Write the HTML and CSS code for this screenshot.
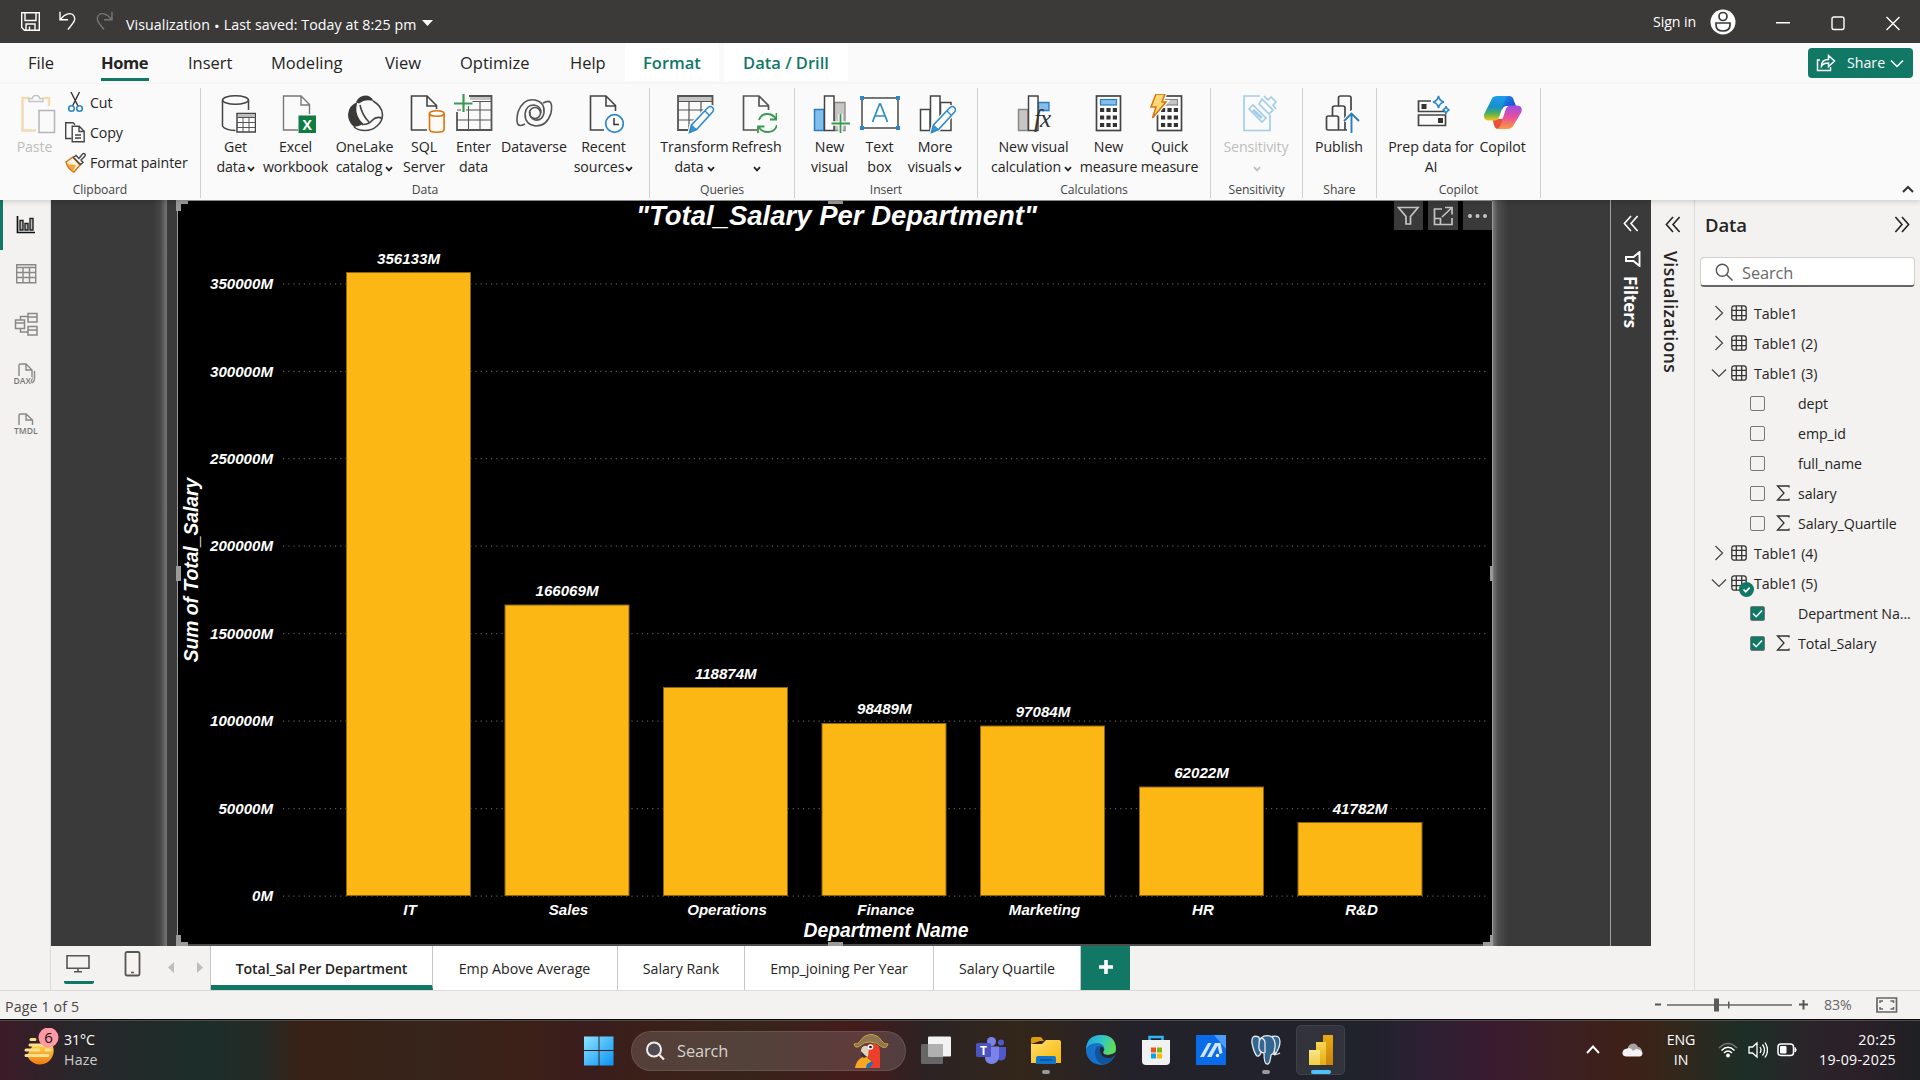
FILE: index.html
```html
<!DOCTYPE html>
<html lang="en">
<head>
<meta charset="utf-8">
<title>Visualization</title>
<link rel="stylesheet" href="styles.css">
</head>
<body>
<svg class="defs" width="0" height="0">
  <defs>
    <symbol id="caret" viewBox="0 0 8 6"><path d="M1 1.2 4 4.4 7 1.2" fill="none" stroke="currentColor" stroke-width="1.8"/></symbol>
    <symbol id="tbl" viewBox="0 0 16 16"><g fill="none" stroke="#333" stroke-width="1.3"><rect x=".8" y=".8" width="14.4" height="14.4" rx="2.5"/><path d="M5.3 1v14M10.7 1v14M1 5.3h14M1 10.7h14"/></g></symbol>
    <symbol id="sigma" viewBox="0 0 14 16"><path d="M13 2.5V1H1.5L8 8l-6.500 7H13v-1.500" fill="none" stroke="#333" stroke-width="1.300"/></symbol>
    <symbol id="right" viewBox="0 0 16 16"><path d="M4.500 1 11.500 8l-7 7" fill="none" stroke="#444" stroke-width="1.200"/></symbol>
    <symbol id="down" viewBox="0 0 16 16"><path d="M1 4.500 8 11.500l7-7" fill="none" stroke="#444" stroke-width="1.200"/></symbol>
    <symbol id="dbl" viewBox="0 0 16 18"><path d="M8 1 1 9l7 8M15 1 8 9l7 8" fill="none" stroke="currentColor" stroke-width="1.700"/></symbol>
    <symbol id="pencil" viewBox="0 0 27 29"><path d="M1.500 27.500 3.500 20 20 2.500q2.500-2 4.500 0t0 4.500L8.500 24.500z" fill="#fafafa" stroke="#fafafa" stroke-width="4"/><path d="M1.500 27.500 3.500 20 20 2.500q2.500-2 4.500 0t0 4.500L8.500 24.500z" fill="#fafafa" stroke="#2b88c8" stroke-width="1.500"/><path d="M1.500 27.500 3.500 20l5 4.500z" fill="#3f95d2" stroke="#2b88c8"/><path d="m17 6 4.500 4.500" stroke="#2b88c8" stroke-width="1.300"/></symbol>
  </defs>
</svg>
<div class="window">
  <header class="titlebar">
    <svg class="quick" viewBox="0 0 100 24" width="100" height="24"><g fill="none" stroke="#fff" stroke-width="1.400"><path d="M1.700 1.700h17.600v17.600H4.500L1.700 16.500zM5 2v7.500h11V2M6 19v-6h9v6M9.500 19v-3.500"/><path d="M40 .8v8h8M40.500 8.500C45 2 52 1 54 5s0 6-6 13.500"/><path stroke="#777" d="M92 .8v8h-8M91.500 8.500C87 2 80 1 78 5s0 6 6 13.500"/></g></svg>
    <span class="doc">Visualization <b>•</b> Last saved: Today at 8:25 pm</span>
    <svg class="docarrow" width="11" height="6" viewBox="0 0 11 6"><path d="M0 0h11L5.500 6z" fill="#fff"/></svg>
    <span class="signin">Sign in</span>
    <svg class="avatar" width="26" height="26" viewBox="0 0 26 26"><circle cx="13" cy="13" r="12.500" fill="#fff"/><circle cx="13" cy="7.500" r="4" fill="none" stroke="#3b3a39" stroke-width="1.700"/><path d="M6 14h14v2q0 6-7 6t-7-6z" fill="none" stroke="#3b3a39" stroke-width="1.700"/></svg>
    <svg class="winbtns" width="126" height="16" viewBox="0 0 126 16"><g fill="none" stroke="#fff" stroke-width="1.400"><path d="M0 7.700h14M110.500 2l13 13M123.500 2l-13 13"/><rect x="56" y="2" width="12" height="12.500" rx="2"/></g></svg>
  </header>

  <nav class="tabs">
    <span class="tab t-file">File</span><span class="tab t-home"><span>Home</span></span><span class="tab t-insert">Insert</span><span class="tab t-model">Modeling</span><span class="tab t-view">View</span><span class="tab t-opt">Optimize</span><span class="tab t-help">Help</span><span class="ctx c-format">Format</span><span class="ctx c-drill">Data / Drill</span>
    <button class="share"><svg width="20" height="18" viewBox="0 0 20 18"><path d="M4 6H1.500v10.500h13V13M5.500 12c0-5 3-6.500 7-6.500V1.500L18.500 7 12.500 12.500V9C9 9 7 9.500 5.500 12z" fill="none" stroke="#fff" stroke-width="1.500"/></svg><span>Share</span><svg width="14" height="9" viewBox="0 0 14 9"><path d="m1 1.500 6 6 6-6" fill="none" stroke="#fff" stroke-width="1.500"/></svg></button>
  </nav>

  <section class="ribbon">
    <div class="group g-clip">
      <div class="cmds">
        <div class="btn off"><svg class="ico" viewBox="0 0 40 40"><path d="M13 4H6.500v32.500H20M28 4h5v8" fill="none" stroke="#f3d9b4" stroke-width="2.500"/><path d="M13 7.500V4.500h3.500q0-3 3.500-3t3.500 3H27v3z" fill="#fafafa" stroke="#c4c4c4" stroke-width="1.400"/><path d="M23 16.500h15.500v22H23z" fill="#fafafa" stroke="#b5b5b5" stroke-width="1.500"/></svg><span>Paste</span></div>
        <div class="small">
          <div><svg viewBox="0 0 22 22"><g fill="none"><path d="M7 1 14 15M15.500 1 8.500 15" stroke="#333" stroke-width="1.400"/><circle cx="7.500" cy="17.500" r="2.800" stroke="#2b88c8" stroke-width="1.600"/><circle cx="15.500" cy="17.500" r="2.800" stroke="#2b88c8" stroke-width="1.600"/></g></svg><span>Cut</span></div>
          <div><svg viewBox="0 0 22 22"><g fill="#fafafa" stroke="#444" stroke-width="1.400"><path d="M7.500 17.500H1.700V1.700H9l2 2"/><path d="M8.200 5.200h7l5 5v10.600h-12zM15 5.500v5h5M11 14h6M11 17h6" /></g></svg><span>Copy</span></div>
          <div><svg viewBox="0 0 22 22"><path d="M2 11 9 6l7 8-6 7q-6-3-8-10z" fill="#fff3dc" stroke="#d9730d" stroke-width="1.500"/><path d="m3 13 9 1-3 6z" fill="#f2a33a"/><path d="m9.500 6.500 2.500-2 3 3 3.500-4.500q1.500-1 2.300 0t0 2.200L17 9l2 2.500-2.500 2z" fill="#fafafa" stroke="#444" stroke-width="1.400"/></svg><span>Format painter</span></div>
        </div>
      </div>
      <div class="gname">Clipboard</div>
    </div>

    <div class="group g-data">
      <div class="cmds">
        <div class="btn"><svg class="ico" viewBox="0 0 40 40"><g fill="none" stroke="#444" stroke-width="1.500"><ellipse cx="19.500" cy="6" rx="13" ry="4.300"/><path d="M6.500 6v26q2 4 13 4.500M32.500 6v10"/></g><path d="M21 19.500h18.500V38H21z" fill="#fff" stroke="#444" stroke-width="1.500"/><path d="M22 20.500h16.500v2.500H22z" fill="#bbb"/><path d="M21 23.500h18.500M21 28.500h18.500M21 33.500h18.500M27 24v14M33 24v14" stroke="#555" stroke-width="1"/></svg><span>Get</span><span>data<svg class="caret"><use href="#caret"/></svg></span></div>
        <div class="btn"><svg class="ico" viewBox="0 0 40 40"><path d="M22 36H7.500V2H25l8.500 8.500V20M25 2v9h8.500" fill="none" stroke="#777" stroke-width="1.400"/><rect x="22.500" y="21.500" width="17.500" height="17.500" fill="#107c41"/><text x="31.200" y="35.500" class="xl">X</text></svg><span>Excel</span><span>workbook</span></div>
        <div class="btn"><svg class="ico" viewBox="0 0 40 40"><path d="M11 8Q14 1.500 20.500 1.500 26 1.500 28.500 7 20 4.500 14 9.500z" fill="#3b3a39"/><path d="M12.500 8Q10 15 12.500 21.500 14.500 27 18.500 30q-5 2.500-9.500 3Q3 28 3 20.500 3.500 11.500 12.500 8z" fill="#3b3a39"/><g fill="none" stroke="#444" stroke-width="1.600"><path d="M28 7q9 5 9.500 13.500 0 7-5.500 11.500-5 4.500-12 4.500T9 33"/><path d="M15 11q2 10 9 17M17 30.500q6 .5 10-4 5-5 10-2"/></g></svg><span>OneLake</span><span>catalog<svg class="caret gap"><use href="#caret"/></svg></span></div>
        <div class="btn"><svg class="ico" viewBox="0 0 40 40"><path d="M22 36H6.500V2H22l9.500 9.500V15M22 2v10h9.500" fill="none" stroke="#444" stroke-width="1.600"/><path d="M24.500 19.500v16q0 2.700 7.300 2.700t7.300-2.700v-16" fill="#fdfaf5" stroke="#d9730d" stroke-width="1.600"/><ellipse cx="31.800" cy="19.500" rx="7.300" ry="2.800" fill="#fff" stroke="#d9730d" stroke-width="1.600"/></svg><span>SQL</span><span>Server</span></div>
        <div class="btn"><svg class="ico" viewBox="0 0 40 40"><path d="M16 2.500h21v3.500H16z" fill="#c4c4c4"/><g fill="none" stroke="#555"><path d="M15 2h22.500v34H3V18" stroke-width="1.800"/><path d="M15 7.500h22M3 16h34M3 26h34M14.500 12v24M26 8v28" stroke-width="1.100"/></g><path d="M9.500 0v18M0 9.500h18.500" stroke="#fafafa" stroke-width="5"/><path d="M9.500 0v18M0 9.500h18.500" stroke="#3a9a52" stroke-width="2.200"/></svg><span>Enter</span><span>data</span></div>
        <div class="btn"><svg class="ico" viewBox="0 0 40 40"><g fill="none" stroke="#555" stroke-width="1.600"><path d="M10 30Q-1 36 3 18 8 4 20 6q10 2 9 13-2 8-9 7-6-2-5-8"/><path d="M28 9q11-6 8 10-4 13-15 13-11-1-11-12 1-9 9-9 7 1 7 8"/><circle cx="20" cy="19" r="5.500"/></g></svg><span>Dataverse</span></div>
        <div class="btn"><svg class="ico" viewBox="0 0 40 40"><path d="M20 36H6.500V2H22l9.500 9.500V17M22 2v10h9.500" fill="none" stroke="#444" stroke-width="1.600"/><circle cx="30.500" cy="29.500" r="8.800" fill="#fdfdfd" stroke="#2b88c8" stroke-width="1.700"/><path d="M30 24v6.500h5" fill="none" stroke="#333" stroke-width="1.500"/></svg><span>Recent</span><span>sources<svg class="caret"><use href="#caret"/></svg></span></div>
      </div>
      <div class="gname">Data</div>
    </div>

    <div class="group g-query">
      <div class="cmds">
        <div class="btn"><svg class="ico" viewBox="0 0 40 40"><path d="M3.500 2.500h33.500v4.500H3.500z" fill="#c4c4c4"/><g fill="none" stroke="#555"><path d="M20 36H3V2h34.500v10" stroke-width="1.800"/><path d="M3 7.500h34M3 16h27M3 26h17M14 8v28M26 8v12" stroke-width="1.200"/></g><svg x="13" y="11" width="27" height="29"><use href="#pencil"/></svg></svg><span>Transform</span><span>data<svg class="caret gap"><use href="#caret"/></svg></span></div>
        <div class="btn"><svg class="ico" viewBox="0 0 40 40"><path d="M20 36H6.500V2H22l9.500 9.500V16M22 2v10h9.500" fill="none" stroke="#555" stroke-width="1.700"/><g fill="none" stroke="#3a9a52" stroke-width="1.800"><path d="M22 26q2-6 8-6t9 5M39.500 19v6.500H33M40 31q-2 7-9 7t-9-5M21 39v-6.500h6.500"/></g></svg><span>Refresh</span><span><svg class="caret"><use href="#caret"/></svg></span></div>
      </div>
      <div class="gname">Queries</div>
    </div>

    <div class="group g-insert">
      <div class="cmds">
        <div class="btn"><svg class="ico" viewBox="0 0 40 40"><path d="M4.500 15.500H14v21H4.500z" fill="#83beec" stroke="#2b7cc0" stroke-width="1.500"/><path d="M24.500 8.500H35v28H24.500z" fill="#c8c6c4" stroke="#8a8886" stroke-width="1.300"/><path d="M14.500 2h9.500v34.500h-9.500z" fill="#fff" stroke="#444" stroke-width="1.500"/><path d="M30.500 20v19M21.500 29.500h19" stroke="#fafafa" stroke-width="4.500"/><path d="M30.500 20v19M21.500 29.500h19" stroke="#3a9a52" stroke-width="1.800"/></svg><span>New</span><span>visual</span></div>
        <div class="btn"><svg class="ico" viewBox="0 0 40 40"><rect x="2" y="4" width="36" height="30" fill="#fff" stroke="#555" stroke-width="1.600"/><path d="M0 2h4v4H0zM36 2h4v4h-4zM0 32h4v4H0zM36 32h4v4h-4z" fill="#2b88c8"/><path d="m12.500 28 7-18h1l7 18M15 22h10" fill="none" stroke="#2b88c8" stroke-width="1.700"/></svg><span>Text</span><span>box</span></div>
        <div class="btn"><svg class="ico" viewBox="0 0 40 40"><path d="M4.500 15.500H14v21H4.500zM24.500 8.500H35v28H24.500zM14.500 2h9.500v34.500h-9.500z" fill="#fff" stroke="#444" stroke-width="1.500"/><svg x="14" y="11" width="27" height="29"><use href="#pencil"/></svg></svg><span>More</span><span>visuals<svg class="caret gap"><use href="#caret"/></svg></span></div>
      </div>
      <div class="gname">Insert</div>
    </div>

    <div class="group g-calc">
      <div class="cmds">
        <div class="btn"><svg class="ico" viewBox="0 0 40 40"><path d="M4.500 15.500H14v21H4.500z" fill="#c8c6c4" stroke="#8a8886" stroke-width="1.500"/><path d="M24.500 8.500H35v8H24.500z" fill="#83beec" stroke="#2b7cc0" stroke-width="1.300"/><path d="M14.500 2h9.500v34.500h-9.500z" fill="#fff" stroke="#444" stroke-width="1.500"/><text x="20" y="33" class="fx">fx</text></svg><span>New visual</span><span class="pull">calculation<svg class="caret gap"><use href="#caret"/></svg></span></div>
        <div class="btn"><svg class="ico" viewBox="0 0 40 40"><rect x="7.500" y="2" width="24" height="34.500" fill="#fff" stroke="#444" stroke-width="1.700"/><rect x="11.500" y="5.500" width="16" height="5.500" fill="#83beec" stroke="#2b7cc0" stroke-width="1.200"/><path d="M11 16h17M11 23.500h17M11 31h17" stroke="#333" stroke-width="3.800" stroke-dasharray="4.200 2.200"/></svg><span>New</span><span>measure</span></div>
        <div class="btn"><svg class="ico" viewBox="0 0 40 40"><rect x="7.500" y="2" width="24" height="34.500" fill="#fff" stroke="#444" stroke-width="1.700"/><rect x="11.500" y="5.500" width="16" height="5.500" fill="#c8c6c4" stroke="#8a8886" stroke-width="1.200"/><path d="M11 16h17M11 23.500h17M11 31h17" stroke="#333" stroke-width="3.800" stroke-dasharray="4.200 2.200"/><path d="M6 0h9l-3 8h4L2.500 24 6 13H1z" fill="#ffe08a" stroke="#fafafa" stroke-width="4"/><path d="M6 0h9l-3 8h4L2.500 24 6 13H1z" fill="#ffd976" stroke="#d9730d" stroke-width="1.500"/></svg><span>Quick</span><span>measure</span></div>
      </div>
      <div class="gname">Calculations</div>
    </div>

    <div class="group g-sens">
      <div class="cmds">
        <div class="btn off"><svg class="ico" viewBox="0 0 40 40"><g fill="none" stroke="#a3cde8" stroke-width="1.700"><path d="M23 2H7v34.500h26V21"/><path d="m12 15 4-4 13 13-4 4z"/><path d="m16 16 9 8" stroke-width="3"/><path d="m22 10 10 10 4-4L25 5zM27 2l4 4 3-3 5 5-3 3 3 4"/></g></svg><span>Sensitivity</span><span><svg class="caret"><use href="#caret"/></svg></span></div>
      </div>
      <div class="gname">Sensitivity</div>
    </div>

    <div class="group g-pub">
      <div class="cmds">
        <div class="btn"><svg class="ico" viewBox="0 0 40 40"><g fill="none" stroke="#444" stroke-width="1.700"><path d="M27 36H8q-1.500 0-1.500-1.500V24q0-2 2-2h8q2 0 2 2v12M12.500 22V14q0-2 2-2h8.500q2 0 2 2v22M18.500 12V4q0-2 2-2H29q2 0 2 2v13"/></g><path d="M31.500 39V19M24 27l7.500-8 7.500 8" fill="none" stroke="#fafafa" stroke-width="4"/><path d="M31.500 39V19.500M24 27l7.500-7.500 7.500 7.500" fill="none" stroke="#2b7cb8" stroke-width="1.900"/></svg><span>Publish</span></div>
      </div>
      <div class="gname">Share</div>
    </div>

    <div class="group g-cop">
      <div class="cmds">
        <div class="btn"><svg class="ico" viewBox="0 0 40 40"><g fill="none" stroke="#444" stroke-width="1.700"><path d="M19 7H6.500v10.500h27M6.500 21h27v10.500h-27z"/></g><path d="M9.500 10h5v5h-5zM26 24h5v5h-5z" fill="#333"/><path d="M26.500 2q1 5 5.500 6-4.500 1-5.500 6-1-5-5.500-6 4.500-1 5.500-6zM34 12q.5 3.500 3.500 4-3 .5-3.500 4-.5-3.500-3.500-4 3-.5 3.500-4z" fill="#fafafa" stroke="#2b88c8" stroke-width="1.500"/></svg><span>Prep data for</span><span>AI</span></div>
        <div class="btn"><svg class="ico" viewBox="0 0 40 40"><defs><linearGradient id="ca" x1="0" y1="0" x2="0" y2="1"><stop offset="0" stop-color="#1c9df0"/><stop offset=".45" stop-color="#1790c8"/><stop offset=".7" stop-color="#4bb05a"/><stop offset="1" stop-color="#f5c518"/></linearGradient><linearGradient id="cb" x1="0" y1="0" x2="0" y2="1"><stop offset="0" stop-color="#9a4fe8"/><stop offset=".5" stop-color="#e8509a"/><stop offset="1" stop-color="#ff9a3c"/></linearGradient><linearGradient id="cc" x1="0" y1="0" x2="1" y2="1"><stop offset="0" stop-color="#1c8df0"/><stop offset="1" stop-color="#1a3fc4"/></linearGradient></defs><path d="M19 2h7q4 0 5 5l2 5h-9q-4 0-5 4z" fill="url(#cc)"/><path d="M21 35h-6q-3 0-4-4l-1.500-6h8q4 0 5-3z" fill="#e8503a"/><path d="M9.500 3.500Q11 2 14 2h12q-3 .5-4 4l-5.500 16q-1 4.500-5 4.500H6q-6 0-5-6z" fill="url(#ca)"/><path d="M29.500 33q-2 2-5 2H13q3.500-.5 5-5l4.500-14q1.500-4.500 5-4.500H34q6 0 4.500 6.500z" fill="url(#cb)"/></svg><span>Copilot</span></div>
      </div>
      <div class="gname">Copilot</div>
    </div>
    <svg class="collapse" width="12" height="8" viewBox="0 0 12 8"><path d="m1 7 5-5 5 5" fill="none" stroke="#333" stroke-width="2"/></svg>
  </section>

  <main class="work">
    <aside class="rail">
      <div class="on"><svg viewBox="0 0 24 24"><path d="M3.500 3v16.500H21" fill="none" stroke="#111" stroke-width="1.700"/><path d="M6 7.500h3V17H6zM11 10.500h3V17h-3zM16 5.500h3V17h-3z" fill="#bbb" stroke="#222" stroke-width="1.400"/></svg></div>
      <div><svg viewBox="0 0 24 24"><g fill="none" stroke="#888" stroke-width="1.400"><path d="M2.700 2.700h19v18h-19zM2.700 5.500h19" /><path d="M2.700 10.500h19M2.700 15.500h19M9 5.500v15M15.500 5.500v15"/></g></svg></div>
      <div><svg viewBox="0 0 24 24"><g fill="none" stroke="#888" stroke-width="1.500"><path d="M1.500 8h9v8.500h-9zM1.500 11h9M14 1.500h9V10h-9zM14 5h9M14 14.500h9V23h-9zM14 18h9M6.500 8V4.500H14M6.500 16.500V20H14"/></g></svg></div>
      <div><svg viewBox="0 0 24 24"><g fill="none" stroke="#888" stroke-width="1.400"><path d="M5 14V3.500Q5 2 6.500 2H12l6 6v8q0 4-2.500 4M12 2v6h6M20.500 9v7q0 5-4 5"/></g><text x="-.5" y="21.500" class="dax">DAX</text></svg></div>
      <div><svg viewBox="0 0 24 24"><g fill="none" stroke="#888" stroke-width="1.400"><path d="M5 13V3.500Q5 2 6.500 2H12l6.500 6v5M12 2v6h6"/></g><text x="0" y="21.500" class="dax">TMDL</text></svg></div>
    </aside>

    <div class="center">
      <div class="canvas">
        <div class="glow-l"></div>
        <div class="strip"></div>
        <svg class="chart" width="1316" height="746" viewBox="177 200 1316 746">
          <rect x="177" y="200" width="1316" height="746" fill="#000"/>
          <g stroke="#5a5a5a" stroke-width="1.200" stroke-dasharray="1.200 4">
            <path d="M283 283.800H1488M283 371.300H1488M283 458.700H1488M283 546.200H1488M283 633.700H1488M283 721.100H1488M283 808.600H1488M283 896.100H1488"/>
          </g>
          <g fill="#fdb714" stroke="#8a6413" stroke-width="1">
            <rect x="346.500" y="272.500" width="124" height="623"/>
            <rect x="505" y="605" width="124" height="290.500"/>
            <rect x="663.500" y="687.500" width="124" height="208"/>
            <rect x="822" y="723.500" width="124" height="172"/>
            <rect x="980.500" y="726" width="124" height="169.500"/>
            <rect x="1139.500" y="787" width="124" height="108.500"/>
            <rect x="1298" y="822.500" width="124" height="73"/>
          </g>
          <g class="lbl mid">
            <text x="408.500" y="264">356133M</text><text x="567" y="596">166069M</text><text x="725.800" y="679">118874M</text><text x="884.300" y="714">98489M</text><text x="1043" y="717">97084M</text><text x="1201.500" y="778">62022M</text><text x="1360" y="814">41782M</text>
            <text x="410" y="915">IT</text><text x="568.500" y="915">Sales</text><text x="727" y="915">Operations</text><text x="885.700" y="915">Finance</text><text x="1044.500" y="915">Marketing</text><text x="1203" y="915">HR</text><text x="1361.500" y="915">R&amp;D</text>
          </g>
          <g class="lbl end">
            <text x="273" y="289">350000M</text><text x="273" y="376.500">300000M</text><text x="273" y="464">250000M</text><text x="273" y="551">200000M</text><text x="273" y="639">150000M</text><text x="273" y="726">100000M</text><text x="273" y="814">50000M</text><text x="273" y="901">0M</text>
          </g>
          <text class="axis" x="886" y="937">Department Name</text>
          <text class="axis" transform="translate(198 570) rotate(-90)">Sum of Total_Salary</text>
          <text class="heading" x="836.500" y="225">"Total_Salary Per Department"</text>
          <path d="M177.500 200.500h1315v744.500h-1315z" fill="none" stroke="#9a9a9a"/>
          <path d="M176 200h12v4h-7v7h-5zM176 566h5v15h-5zM828 200h15v4h-15zM828 942h15v4h-15zM1490 566h3v15h-3zM176 935h5v7h7v4h-12zM1493 935h-3v7h-7v4h10z" fill="#9a9a9a"/>
          <g><path d="M1394 201h29v29h-29zM1428 201h30v29h-30zM1463 201h29v29h-29z" fill="#3a3a3a"/>
          <g fill="none" stroke="#c4c4c4" stroke-width="1.700"><path d="M1398.500 207.500h19.500l-7.500 9v7.500h-4.500v-7.500z"/><path d="M1442 209h-7.500v15.500h17.500V218M1434.500 218.500h6v6M1442 217l9.500-9M1445 207.500h7v7"/></g>
          <g fill="#c4c4c4"><circle cx="1470" cy="216" r="2"/><circle cx="1477.500" cy="216" r="2"/><circle cx="1485" cy="216" r="2"/></g></g>
        </svg>
        <div class="glow-r"></div>
        <div class="filters">
          <svg class="dbl"><use href="#dbl"/></svg>
          <svg class="funnel" width="16" height="16" viewBox="0 0 16 16"><path d="M14.500 1v14L8.500 10H1V6h7.500z" fill="none" stroke="#fff" stroke-width="1.900"/></svg>
          <span>Filters</span>
        </div>
      </div>
      <div class="pages">
        <div class="views">
          <div class="view on"><svg width="26" height="20" viewBox="0 0 26 20"><path d="M2 1.700h22v12.500H2zM13 14v3.500M9 17.700h8" fill="none" stroke="#555" stroke-width="1.600"/></svg></div>
          <svg class="phone" width="18" height="26" viewBox="0 0 18 26"><rect x="1.500" y="1" width="14" height="23.500" rx="1.500" fill="#f7f3ee" stroke="#555" stroke-width="1.800"/><path d="M7 21.500h3" stroke="#555" stroke-width="1.500"/></svg>
          <svg class="arrows" width="36" height="11" viewBox="0 0 36 11"><path d="M6 0v11L0 5.500zM29 0v11l6-5.500z" fill="#bdbdbd"/></svg>
        </div>
        <div class="page p1 on">Total_Sal Per Department</div><div class="page p2">Emp Above Average</div><div class="page p3">Salary Rank</div><div class="page p4">Emp_joining Per Year</div><div class="page p5">Salary Quartile</div><div class="add"><svg width="14" height="14" viewBox="0 0 14 14"><path d="M7 0v14M0 7h14" stroke="#fff" stroke-width="3.600"/></svg></div>
      </div>
    </div>

    <aside class="viz"><svg class="dbl"><use href="#dbl"/></svg><span>Visualizations</span></aside>

    <aside class="data">
      <div class="dhead"><span>Data</span><svg class="dbl flip"><use href="#dbl"/></svg></div>
      <div class="search"><svg width="18" height="18" viewBox="0 0 18 18"><circle cx="7.300" cy="7.300" r="6" fill="none" stroke="#555" stroke-width="1.400"/><path d="m11.500 11.500 6 6" stroke="#555" stroke-width="1.500"/></svg><span>Search</span></div>
      <div class="tree">
        <div class="row"><svg class="ch"><use href="#right"/></svg><svg class="tb"><use href="#tbl"/></svg><span>Table1</span></div>
        <div class="row"><svg class="ch"><use href="#right"/></svg><svg class="tb"><use href="#tbl"/></svg><span>Table1 (2)</span></div>
        <div class="row"><svg class="ch"><use href="#down"/></svg><svg class="tb"><use href="#tbl"/></svg><span>Table1 (3)</span></div>
        <div class="row field"><i></i><b></b><span>dept</span></div>
        <div class="row field"><i></i><b></b><span>emp_id</span></div>
        <div class="row field"><i></i><b></b><span>full_name</span></div>
        <div class="row field"><i></i><b><svg><use href="#sigma"/></svg></b><span>salary</span></div>
        <div class="row field"><i></i><b><svg><use href="#sigma"/></svg></b><span>Salary_Quartile</span></div>
        <div class="row"><svg class="ch"><use href="#right"/></svg><svg class="tb"><use href="#tbl"/></svg><span>Table1 (4)</span></div>
        <div class="row used"><svg class="ch"><use href="#down"/></svg><svg class="tb"><use href="#tbl"/></svg><svg class="badge" viewBox="0 0 15 15"><circle cx="7.500" cy="7.500" r="7.500" fill="#117865"/><path d="m4.500 7.500 2.200 2.200 4-4" fill="none" stroke="#fff" stroke-width="1.700"/></svg><span>Table1 (5)</span></div>
        <div class="row field"><i class="ck"><svg viewBox="0 0 13 13"><path d="m2 6.500 3.200 3.200L11 3.500" fill="none" stroke="#fff" stroke-width="1.400"/></svg></i><b></b><span>Department Na...</span></div>
        <div class="row field"><i class="ck"><svg viewBox="0 0 13 13"><path d="m2 6.500 3.200 3.200L11 3.500" fill="none" stroke="#fff" stroke-width="1.400"/></svg></i><b><svg><use href="#sigma"/></svg></b><span>Total_Salary</span></div>
      </div>
    </aside>
  </main>

  <footer class="status">
    <span class="pageno">Page 1 of 5</span>
    <svg class="zoom" width="156" height="16" viewBox="0 0 156 16"><path d="M1 7.500h6M145 7.500h9M149.500 3v9.500" stroke="#555" stroke-width="2"/><path d="M13 8h125" stroke="#666" stroke-width="1.300"/><path d="M60 1.500h5v13h-5zM74 4.500h1.500v7H74z" fill="#5a5a5a"/></svg>
    <span class="pct">83%</span>
    <svg class="fit" width="22" height="16" viewBox="0 0 22 16"><path d="M1 1h19.500v14H1z" fill="none" stroke="#666" stroke-width="1.700"/><path d="M4 6V4h3M14.500 4h3v2M4 10v2h3M14.500 12h3v-2" fill="none" stroke="#666" stroke-width="1.500"/></svg>
  </footer>

  <footer class="taskbar">
    <div class="weather">
      <svg width="36" height="40" viewBox="0 0 36 40"><defs><linearGradient id="sun" x1="0" y1="0" x2="0" y2="1"><stop offset="0" stop-color="#fcd34a"/><stop offset="1" stop-color="#ef7a14"/></linearGradient></defs><path d="M29 18.500A13.500 13.500 0 0 1 3 27L9 17h20z" fill="url(#sun)"/><path d="M7 11.500h4M6 17h20M2 22h13M22 22h4M2 27.500h22" stroke="#fbe08c" stroke-width="3" stroke-linecap="round"/><circle cx="24.500" cy="9.500" r="10" fill="#ff99a4"/><text x="24.500" y="14.500" class="bn">6</text></svg>
      <div class="wtext"><div>31°C</div><div class="dim">Haze</div></div>
    </div>
    <svg class="start" width="30" height="30" viewBox="0 0 30 30"><defs><linearGradient id="win" x1="0" y1="0" x2="1" y2="1"><stop offset="0" stop-color="#8ce4ff"/><stop offset="1" stop-color="#0a93f5"/></linearGradient></defs><path d="M0 .5h14.500V14H0zM15.500.5H29.500V14H15.500zM0 15h14.500v14.500H0zM15.500 15H29.500v14.500H15.500z" fill="url(#win)"/></svg>
    <div class="tsearch">
      <svg width="20" height="20" viewBox="0 0 20 20"><circle cx="9" cy="8.500" r="7" fill="#514a4e" stroke="#eee" stroke-width="2"/><path d="m14 13.500 5 5" stroke="#eee" stroke-width="2.200"/></svg>
      <span>Search</span>
      <svg class="parrot" width="36" height="34" viewBox="0 0 36 34"><path d="M13 12q7-5 13 0 1.500 6 1 10v12H14l3-9q-6-3-3-13z" fill="#ee4028"/><path d="M2 34q1-7 6-10 3-2 6-1l5 5-3 6z" fill="#f7a823"/><path d="m14 30 5-3 1 3-4 4h-3z" fill="#1a6fc4"/><path d="M11 12q3-1 5 2l-1 9q-6-3-7-6 0-4 3-5z" fill="#ddd2bd"/><path d="m9 18 4 5-2 1q-3-2-2-6z" fill="#3a3030"/><circle cx="17.500" cy="13" r="2.800" fill="#fff"/><circle cx="17.500" cy="13" r="1.300" fill="#111"/><path d="M1 10q4 1 7-4 3-5 10-5.500Q25 1 28 6q3 5 7 4-1 5-6 3-5-5-12-5Q10 8 7 12q-5 3-6-2z" fill="#8f7650" stroke="#d1a13a" stroke-width="1"/></svg>
    </div>
    <div class="apps">
      <div class="app"><svg viewBox="0 0 30 30"><rect x="0" y="9" width="22" height="20" rx="1" fill="#666"/><rect x="7" y="1.500" width="23" height="20" rx="1" fill="#f2f2f2"/><path d="M7 9h15v12.500H7z" fill="#b0b0b0"/></svg></div>
      <div class="app"><svg viewBox="0 0 30 30"><circle cx="15.500" cy="6.500" r="4.500" fill="#7b83eb"/><circle cx="25" cy="7.500" r="3" fill="#5059c9"/><path d="M21 12h9v8q0 5-5 5.500l-4-1z" fill="#5059c9"/><path d="M9 11.500h14V22q-1 7-7.500 7T9 22z" fill="#7b83eb"/><rect y="8" width="15" height="14" rx="1.500" fill="#4b53bc"/><text x="7.500" y="19.500" class="tm">T</text></svg></div>
      <div class="app run"><svg viewBox="0 0 30 30"><defs><linearGradient id="fo" x1="0" y1="0" x2="1" y2="1"><stop offset="0" stop-color="#ffdf6a"/><stop offset="1" stop-color="#f9b60a"/></linearGradient></defs><path d="M0 4q0-2 2-2h8l3 4h-4L0 9z" fill="#e09b0c"/><path d="M0 9h11l4-4h13q2 0 2 2v21H0z" fill="url(#fo)"/><path d="M5 29v-6q0-2 2-2h16q2 0 2 2v6z" fill="#1076cc"/><path d="M9 25h12" stroke="#0b4f93" stroke-width="1.500"/></svg></div>
      <div class="app"><svg viewBox="0 0 30 30"><defs><linearGradient id="eg" x1="0" y1="0" x2="1" y2=".3"><stop offset="0" stop-color="#1e9fe8"/><stop offset=".6" stop-color="#35c8c0"/><stop offset="1" stop-color="#5fdb5a"/></linearGradient></defs><circle cx="15" cy="15" r="15" fill="#1571c9"/><path d="M0 14Q1 0 15 0t15 13q0 7-8 7-5 0-5-3 2-2 1-5-2-4-7-4Q3 8 0 14z" fill="url(#eg)"/><path d="M9 17q0-6 5-6 3 0 4 2 1 2-1 4 0 6 11 4-3 8-12 8-7-3-7-12z" fill="#10539e"/><path d="M14 15q0-3 2-3 3 2 1 5 0 3 5 3 4 0 8-3-1 6-8 6-8-1-8-8z" fill="#2a2525"/></svg></div>
      <div class="app"><svg viewBox="0 0 30 30"><path d="M8.500 8V2h13v6" fill="none" stroke="#2cb8f5" stroke-width="2.500"/><path d="M1 5h28v21q0 4-4 4H5q-4 0-4-4z" fill="#f1f1f1"/><path d="M10 12.500h5v5h-5z" fill="#f04e23"/><path d="M16 12.500h5v5h-5z" fill="#7fba00"/><path d="M10 18.500h5v5h-5z" fill="#00a4ef"/><path d="M16 18.500h5v5h-5z" fill="#ffb900"/></svg></div>
      <div class="app"><svg viewBox="0 0 30 30"><path d="M0 0h30v30H0z" fill="#0a6be8"/><path d="M18 0h12v14z" fill="#4b9cff"/><path d="M4 22 12 8h3.500L8 22zM11 22 19 8h4l-7.500 14zM21 8h3.500l2 10-3 1z" fill="#cfe6ff"/><circle cx="21.500" cy="20.500" r="1.700" fill="#fff"/></svg></div>
      <div class="app run"><svg viewBox="0 0 30 30"><g fill="#336791" stroke="#e6e9ee" stroke-width="1.300"><path d="M8 2Q0-1 1 8q2 10 5 13 2 1 4-3zM21 1.500q8-2 8 5 0 6-5 13z"/><path d="M10 3q5-4 11-1 5 5 2 15-1 2-3 3-1 10-4 9-3 0-3-11-6-1-5-8 0-5 2-7z"/><path d="M14 18V8q0-4-4-5M22 19q4 1 7-1" fill="none"/></g></svg></div>
      <div class="app active"><svg viewBox="0 0 30 30"><defs><linearGradient id="b1" x1="0" y1="0" x2="0" y2="1"><stop offset="0" stop-color="#e8ac12"/><stop offset="1" stop-color="#c9820c"/></linearGradient><linearGradient id="b2" x1="0" y1="0" x2="0" y2="1"><stop offset="0" stop-color="#f6d751"/><stop offset="1" stop-color="#e6ab14"/></linearGradient><linearGradient id="b3" x1="0" y1="0" x2="0" y2="1"><stop offset="0" stop-color="#f9e589"/><stop offset="1" stop-color="#f2ce44"/></linearGradient></defs><path d="M17 0h10v30H17z" fill="url(#b1)"/><path d="M10 7h10v23H10z" fill="url(#b2)"/><path d="M3 15h11v15H3z" fill="url(#b3)"/></svg></div>
    </div>
    <div class="tray">
      <svg class="up" width="14" height="9" viewBox="0 0 14 9"><path d="m1 8 6-6.500L13 8" fill="none" stroke="#fff" stroke-width="1.900"/></svg>
      <svg class="cloud" width="22" height="14" viewBox="0 0 22 14"><path d="M6 8q-1-5 3-7 5-2 7 3 3 0 4 4z" fill="#a9a4a4"/><path d="M4 13.500q-4-.5-3.500-4T5 5.500Q9 4 11 8q3-3 5.500-1.500 4 1 4 4-.5 3-3 3z" fill="#f4f4f4"/></svg>
      <div class="lang"><div>ENG</div><div>IN</div></div>
      <svg class="wifi" width="20" height="16" viewBox="0 0 20 16"><g fill="none" stroke="#fff" stroke-width="1.500"><path d="M1 6q9-9 18 0" stroke="#777"/><path d="M3.500 8.500q6.500-6.500 13 0M6 11q4-4 8 0"/></g><circle cx="10" cy="13.500" r="1.900" fill="#fff"/></svg>
      <svg class="spk" width="20" height="18" viewBox="0 0 20 18"><path d="M1 6h3.500L9 2v14l-4.500-4H1zM12 6q2 3 0 6M14.500 3.500q4 5.500 0 11M17 1.500q5 7.500 0 15" fill="none" stroke="#fff" stroke-width="1.300"/></svg>
      <svg class="bat" width="21" height="14" viewBox="0 0 21 14"><rect x="1" y="1" width="15.500" height="11.500" rx="3" fill="none" stroke="#fff" stroke-width="1.500"/><rect x="3" y="3" width="6.500" height="7.500" rx="1" fill="#fff"/><path d="M18 4.500q2.500 2.300 0 4.600z" fill="#fff" stroke="#fff"/></svg>
      <div class="clock"><div>20:25</div><div>19-09-2025</div></div>
    </div>
  </footer>
</div>
</body>
</html>
```
FILE: styles.css
```css
* { box-sizing: border-box; }
body { margin: 0; background: #f3f2f1; font-family: "Open Sans", "Noto Sans", sans-serif; font-size: 14.2px; letter-spacing: -0.1px; color: #252423; }
svg { display: block; flex: none; }
.defs { position: absolute; }
.window { width: 1920px; height: 1080px; display: flex; flex-direction: column; overflow: hidden; }

.titlebar { height: 43px; background: #3b3a39; color: #fff; display: flex; align-items: center; padding-left: 20px; flex: none; }
.quick { margin-top: 2px; }
.doc { margin-left: 6px; width: 289px; padding-top: 5px; white-space: nowrap; letter-spacing: 0.08px; }
.doc b { font-size: 11px; margin: 0 1px; }
.docarrow { margin-left: 7px; margin-top: 2px; }
.signin { margin-left: auto; width: 46px; white-space: nowrap; }
.avatar { margin-left: 11px; }
.winbtns { width: 126px; margin: 2px 18px 0 40px; }

.tabs { height: 41px; flex: none; display: flex; background: #fafafa; padding: 1px 7px 0 28px; font-size: 16.5px; line-height: 38px; letter-spacing: 0; white-space: nowrap; }
.tab { flex: none; height: 38px; }
.t-file { width: 73px; } .t-home { width: 87px; } .t-insert { width: 83px; } .t-model { width: 114px; }
.t-view { width: 75px; } .t-opt { width: 110px; } .t-help { width: 55px; }
.t-home { font-weight: 700; letter-spacing: -0.4px; }
.t-home span { display: block; width: 48px; border-bottom: 3px solid #117865; height: 37px; }
.ctx { background: #fff; color: #117865; font-weight: 600; height: 37px; text-align: center; }
.c-format { width: 94px; margin-right: 5px; } .c-drill { width: 124px; }
.share { margin: 4px 0 0 auto; width: 105px; height: 30px; border: 0; border-radius: 4px; background: #117865; color: #fff; font: inherit; font-size: 14.2px; line-height: 20px; display: flex; align-items: center; padding: 0 0 0 8px; }
.share span { margin: 0 5px 0 11px; }

.ribbon { height: 116px; flex: none; background: #fafafa; display: flex; position: relative; z-index: 2; box-shadow: 0 2px 5px rgba(0,0,0,.14); }
.group { height: 110px; margin-top: 4px; border-right: 1px solid #d2d0ce; display: flex; flex-direction: column; flex: none; }
.cmds { display: flex; height: 93px; padding-top: 5px; }
.btn { display: flex; flex-direction: column; align-items: center; line-height: 20px; white-space: nowrap; flex: none; }
.btn > span { height: 20px; display: flex; align-items: center; }
.ico { width: 40px; height: 40px; margin: 1px 0 3px; }
.off { color: #c0bebc; }
.caret { width: 8px; height: 6px; margin: 3px 0 0 1px; }
.caret.gap { margin-left: 3px; }
.btn > .pull { margin-right: 4px; }
.btn > span { padding-right: 1px; }
.gname { text-align: center; font-size: 12.2px; line-height: 17px; margin-top: 2px; color: #444; white-space: nowrap; }
.g-clip { width: 201px; } .g-clip .btn { width: 70px; } .g-clip .ico { transform: translateX(2px); margin-left: -2px; }
.small { margin: -6px 0 0 -9px; display: flex; flex-direction: column; }
.small div { display: flex; height: 30px; align-items: center; white-space: nowrap; }
.small svg { width: 22px; height: 22px; margin: 0 4px 0 3px; }
.g-data { width: 449px; } .g-data .cmds { padding-left: 5px; }
.g-data .btn:nth-child(1) { width: 60px; } .g-data .btn:nth-child(2) { width: 60px; } .g-data .btn:nth-child(3) { width: 78px; }
.g-data .btn:nth-child(4) { width: 41px; } .g-data .btn:nth-child(5) { width: 58px; } .g-data .btn:nth-child(6) { width: 63px; } .g-data .btn:nth-child(7) { width: 76px; }
.g-query { width: 145px; } .g-query .cmds { padding-left: 11px; }
.g-query .btn:nth-child(1) { width: 68px; } .g-query .btn:nth-child(2) { width: 56px; }
.g-insert { width: 183px; } .g-insert .cmds { padding-left: 12px; }
.g-insert .btn:nth-child(1) { width: 46px; } .g-insert .btn:nth-child(2) { width: 54px; } .g-insert .btn:nth-child(3) { width: 57px; }
.g-calc { width: 233px; } .g-calc .cmds { padding-left: 8px; }
.g-calc .btn:nth-child(1) { width: 96px; } .g-calc .btn:nth-child(2) { width: 54px; } .g-calc .btn:nth-child(3) { width: 68px; }
.g-sens { width: 92px; } .g-sens .btn { width: 91px; }
.g-pub { width: 74px; } .g-pub .btn { width: 73px; }
.g-cop { width: 164px; } .g-cop .cmds { padding-left: 10px; }
.g-cop .btn:nth-child(1) { width: 89px; } .g-cop .btn:nth-child(2) { width: 54px; }
.collapse { margin: 101px 6px 0 auto; }
.xl { font: 700 14px "Open Sans", sans-serif; fill: #fff; text-anchor: middle; }
.fx { font: italic 25px "Liberation Serif", serif; fill: #333; letter-spacing: -1px; }
.tm { font: 700 12px "Open Sans", sans-serif; fill: #fff; text-anchor: middle; }

.work { height: 790px; flex: none; display: flex; }
.rail { width: 51px; border-right: 1px solid #dcdad8; display: flex; flex-direction: column; flex: none; }
.rail div { height: 50px; display: flex; align-items: center; justify-content: center; border-left: 3px solid transparent; padding: 0 2px 2px 0; }
.rail .on { border-color: #117865; padding-bottom: 0; }
.rail svg { width: 24px; height: 24px; }
.dax { font: 600 8.6px "Open Sans", sans-serif; fill: #777; letter-spacing: 0; stroke: #f3f2f1; stroke-width: 2px; paint-order: stroke; }

.center { width: 1600px; flex: none; }
.canvas { height: 746px; display: flex; background: #3a3a3a; }
.glow-l { width: 116px; background: linear-gradient(90deg, #3a3a3a 88%, #454545 94%, #777 100%); }
.strip { width: 10px; }
.chart { overflow: visible; }
.glow-r { width: 117px; background: linear-gradient(90deg, #777 0, #505050 4%, #3a3a3a 13%); }
.filters { width: 41px; border-left: 1px solid #a0a0a0; color: #fff; display: flex; flex-direction: column; align-items: center; padding-top: 15px; }
.dbl { width: 16px; height: 17px; }
.flip { transform: scaleX(-1); }
.funnel { margin: 19px 0 0 4px; }
.filters span, .viz span { writing-mode: vertical-rl; font-weight: 600; font-size: 17px; line-height: 22px; white-space: nowrap; }
.filters span { margin: 9px 2px 0 0; font-weight: 700; font-size: 17px; letter-spacing: -0.2px; }
.viz { width: 44px; flex: none; border-right: 1px solid #dcdad8; display: flex; flex-direction: column; align-items: center; padding-top: 16px; }
.viz span { margin: 18px 4px 0 0; font-size: 17.5px; letter-spacing: 0.45px; }

.lbl text { font: italic 700 15.1px "Liberation Sans", Arial, sans-serif; fill: #fff; letter-spacing: 0; }
.mid text { text-anchor: middle; } .end text { text-anchor: end; }
.axis { font: italic 700 19.3px "Liberation Sans", Arial, sans-serif; fill: #fff; letter-spacing: 0; text-anchor: middle; }
.heading { font: italic 700 27.5px "Liberation Sans", Arial, sans-serif; fill: #fff; letter-spacing: 0; text-anchor: middle; }

.pages { height: 44px; display: flex; }
.views { width: 160px; display: flex; border-right: 1px solid #c8c6c4; padding-left: 13px; flex: none; }
.view { width: 30px; height: 38px; border-bottom: 3px solid #117865; border-radius: 0 0 2px 2px; padding: 8px 1px 0; }
.phone { margin: 5px 0 0 30px; }
.arrows { margin: 16px 0 0 26px; }
.page { background: #fff; border-right: 1px solid #c8c6c4; text-align: center; line-height: 45px; white-space: nowrap; flex: none; letter-spacing: 0; }
.p1 { width: 222px; font-weight: 600; letter-spacing: -0.12px; border-bottom: 5px solid #117865; }
.p2 { width: 185px; padding-right: 1px; } .p3 { width: 127px; } .p4 { width: 189px; letter-spacing: -0.1px; } .p5 { width: 147px; letter-spacing: -0.1px; }
.add { width: 49px; background: #117865; display: flex; align-items: center; justify-content: center; padding-bottom: 3px; }

.data { flex: 1; overflow: hidden; }
.dhead { display: flex; justify-content: space-between; align-items: center; height: 49px; padding: 0 10px 0 10px; font-size: 18.500px; font-weight: 600; }
.search { height: 30px; margin: 8px 5px 0; border: 1px solid #d2d0ce; border-bottom: 2px solid #666; border-radius: 4px; background: #fff; display: flex; align-items: center; padding: 1px 0 0 14px; font-size: 16.4px; color: #6b6967; }
.search span { margin-left: 9px; margin-top: 1px; }
.tree { padding: 11px 0 0 16px; }
.row { height: 30px; display: flex; align-items: center; position: relative; white-space: nowrap; letter-spacing: -0.08px; }
.ch { width: 16px; height: 16px; margin-right: 4px; }
.tb { width: 16px; height: 16px; margin-right: 7px; }
.badge { position: absolute; width: 15px; height: 15px; left: 28px; top: 14px; }
.field { padding-left: 39px; }
.field i { width: 15px; height: 15px; border: 1px solid #777; border-radius: 2px; flex: none; }
.field b { width: 33px; flex: none; padding-left: 11px; }
.field b svg { width: 14px; height: 16px; }
.field .ck { background: #117865; }
.ck svg { width: 13px; height: 13px; }

.status { height: 29px; flex: none; border-top: 1px solid #dcdad8; display: flex; align-items: center; padding-left: 5px; color: #484644; }
.pageno { padding-top: 2px; letter-spacing: 0.15px; }
.zoom { margin-left: auto; }
.pct { width: 32px; margin: -2px 20px 0 14px; color: #666; white-space: nowrap; }
.fit { margin-right: 22px; }

.taskbar { height: 62px; flex: none; border-top: 1px solid #0a0a0a; box-shadow: inset 0 1px #4d4a4a; display: flex; color: #fff; line-height: 20px;
  background: linear-gradient(90deg, #3c1b27 0, #29262a 70px, #1c2e2a 200px, #232b26 260px, #382117 300px, #37241a 430px, #3c2018 530px, #3a1d1d 590px, #3a2018 640px, #37241a 750px, #451b1c 860px, #2b2324 930px, #33261a 1020px, #23222a 1130px, #20222c 1370px, #2c2034 1420px, #391b30 1490px, #3c2024 1560px, #3e2018 1620px, #35261a 1670px, #1c2e27 1745px, #292529 1800px, #2c2028 1860px, #1f2024 1920px); }
.taskbar > * { flex: none; }
.weather { width: 584px; display: flex; align-items: center; padding-left: 24px; }
.wtext { margin: -2px 0 0 4px; }
.weather svg { margin-top: -6px; }
.dim { color: #ccc; letter-spacing: 0.2px; }
.bn { font: 15px "Open Sans", sans-serif; fill: #111; text-anchor: middle; letter-spacing: 0; }
.start { margin: 16px 17px 0 0; }
.tsearch { width: 275px; height: 40px; margin-top: 11px; border-radius: 20px; background: rgba(255,255,255,.14); border: 1px solid rgba(255,255,255,.1); display: flex; align-items: center; padding-left: 13px; font-size: 16.4px; color: #d6d2d0; }
.tsearch span { margin-left: 12px; }
.parrot { margin-left: auto; margin-right: 16px; }
.apps { display: flex; margin-left: 2px; }
.app { width: 49px; height: 50px; margin: 5px 3px 0; border-radius: 5px; display: flex; flex-direction: column; align-items: center; padding-top: 10px; }
.app svg { width: 30px; height: 30px; }
.app.run::after { content: ""; width: 8px; height: 4px; border-radius: 2px; background: #999; margin-top: 5px; }
.app.active { background: rgba(255,255,255,.08); border: 1px solid rgba(255,255,255,.07); padding-top: 9px; }
.app.active::after { content: ""; width: 20px; height: 4px; border-radius: 2px; background: #4cc2ff; margin-top: 5px; }
.taskbar .tray { flex: 1; display: flex; align-items: center; padding: 0 24px 2px 0; justify-content: flex-end; }
.cloud { margin-left: 22px; }
.lang { width: 40px; text-align: center; margin-left: 17px; }
.wifi { margin-left: 17px; } .spk { margin-left: 10px; } .bat { margin-left: 9px; }
.clock { text-align: right; width: 98px; letter-spacing: 0.3px; }
```
